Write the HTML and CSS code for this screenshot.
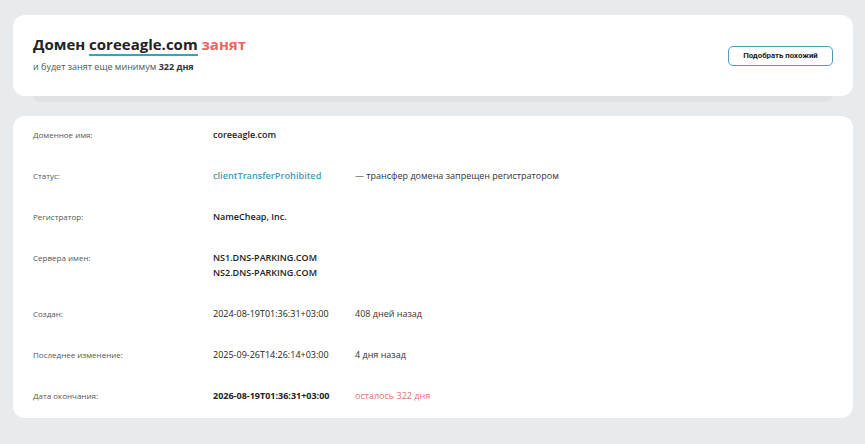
FILE: index.html
```html
<!DOCTYPE html>
<html lang="ru">
<head>
<meta charset="utf-8">
<link rel="stylesheet" href="styles.css">
</head>
<body>
<div class="page">
  <div class="card head">
    <div class="head-text">
      <h1 class="title">Домен <span class="dom">coreeagle.com</span> <span class="busy">занят</span></h1>
      <p class="sub">и будет занят еще минимум <b>322 дня</b></p>
    </div>
    <button class="btn">Подобрать похожий</button>
  </div>
  <div class="stack"></div>
  <div class="card info">
    <div class="row">
      <div class="label">Доменное имя:</div>
      <div class="val strong">coreeagle.com</div>
    </div>
    <div class="row">
      <div class="label">Статус:</div>
      <div class="val strong teal">clientTransferProhibited</div>
      <div class="note">— трансфер домена запрещен регистратором</div>
    </div>
    <div class="row">
      <div class="label">Регистратор:</div>
      <div class="val strong">NameCheap, Inc.</div>
    </div>
    <div class="row">
      <div class="label">Сервера имен:</div>
      <div class="val strong">NS1.DNS-PARKING.COM<br>NS2.DNS-PARKING.COM</div>
    </div>
    <div class="row">
      <div class="label">Создан:</div>
      <div class="val">2024-08-19T01:36:31+03:00</div>
      <div class="note">408 дней назад</div>
    </div>
    <div class="row">
      <div class="label">Последнее изменение:</div>
      <div class="val">2025-09-26T14:26:14+03:00</div>
      <div class="note">4 дня назад</div>
    </div>
    <div class="row last">
      <div class="label">Дата окончания:</div>
      <div class="val bold">2026-08-19T01:36:31+03:00</div>
      <div class="note red">осталось 322 дня</div>
    </div>
  </div>
</div>
</body>
</html>
```
FILE: styles.css
```css
* { box-sizing: border-box; }
html, body { margin: 0; padding: 0; }
body {
  background: #e8ebee;
  font-family: "Open Sans", "Liberation Sans", sans-serif;
  color: #222;
}
.page {
  padding: 15px 12px 0 13px;
}
.card {
  background: #fff;
  border-radius: 12px;
}
.head {
  height: 81px;
  display: flex;
  align-items: center;
  justify-content: space-between;
  padding: 0 20px;
}
.head-text {
  margin-top: -6px;
}
.title {
  margin: 0;
  font-size: 15px;
  font-weight: 700;
  line-height: 22px;
  color: #222;
}
.dom {
  border-bottom: 2px solid #3f9fb3;
}
.busy { color: #e8675f; }
.sub {
  margin: 5px 0 0;
  font-size: 9px;
  line-height: 13px;
  color: #555;
}
.sub b { color: #333; font-weight: 700; }
.btn {
  width: 105px;
  height: 20px;
  border: 1.5px solid #4aa0b2;
  border-radius: 5px;
  background: #fff;
  font-family: Roboto, "Liberation Sans", sans-serif;
  font-weight: 700;
  font-size: 7.8px;
  color: #222;
  padding: 0;
}
.stack {
  height: 6px;
  margin: 0 20px;
  background: #dfe3e6;
  border-radius: 0 0 6px 6px;
}
.info {
  margin-top: 14px;
  padding: 11px 20px 15px;
}
.row {
  display: flex;
  align-items: flex-start;
  margin-bottom: 26px;
  line-height: 15px;
}
.row.last { margin-bottom: 0; }
.label {
  width: 180px;
  font-size: 8px;
  color: #555;
}
.val {
  width: 142px;
  font-size: 9px;
  color: #222;
}
.val.strong { font-weight: 600; }
.val.bold { font-weight: 700; }
.teal { color: #3a9fb8; font-size: 9.2px; }
.note {
  font-size: 9px;
  color: #333;
}
.note.red { color: #e07272; }
```
